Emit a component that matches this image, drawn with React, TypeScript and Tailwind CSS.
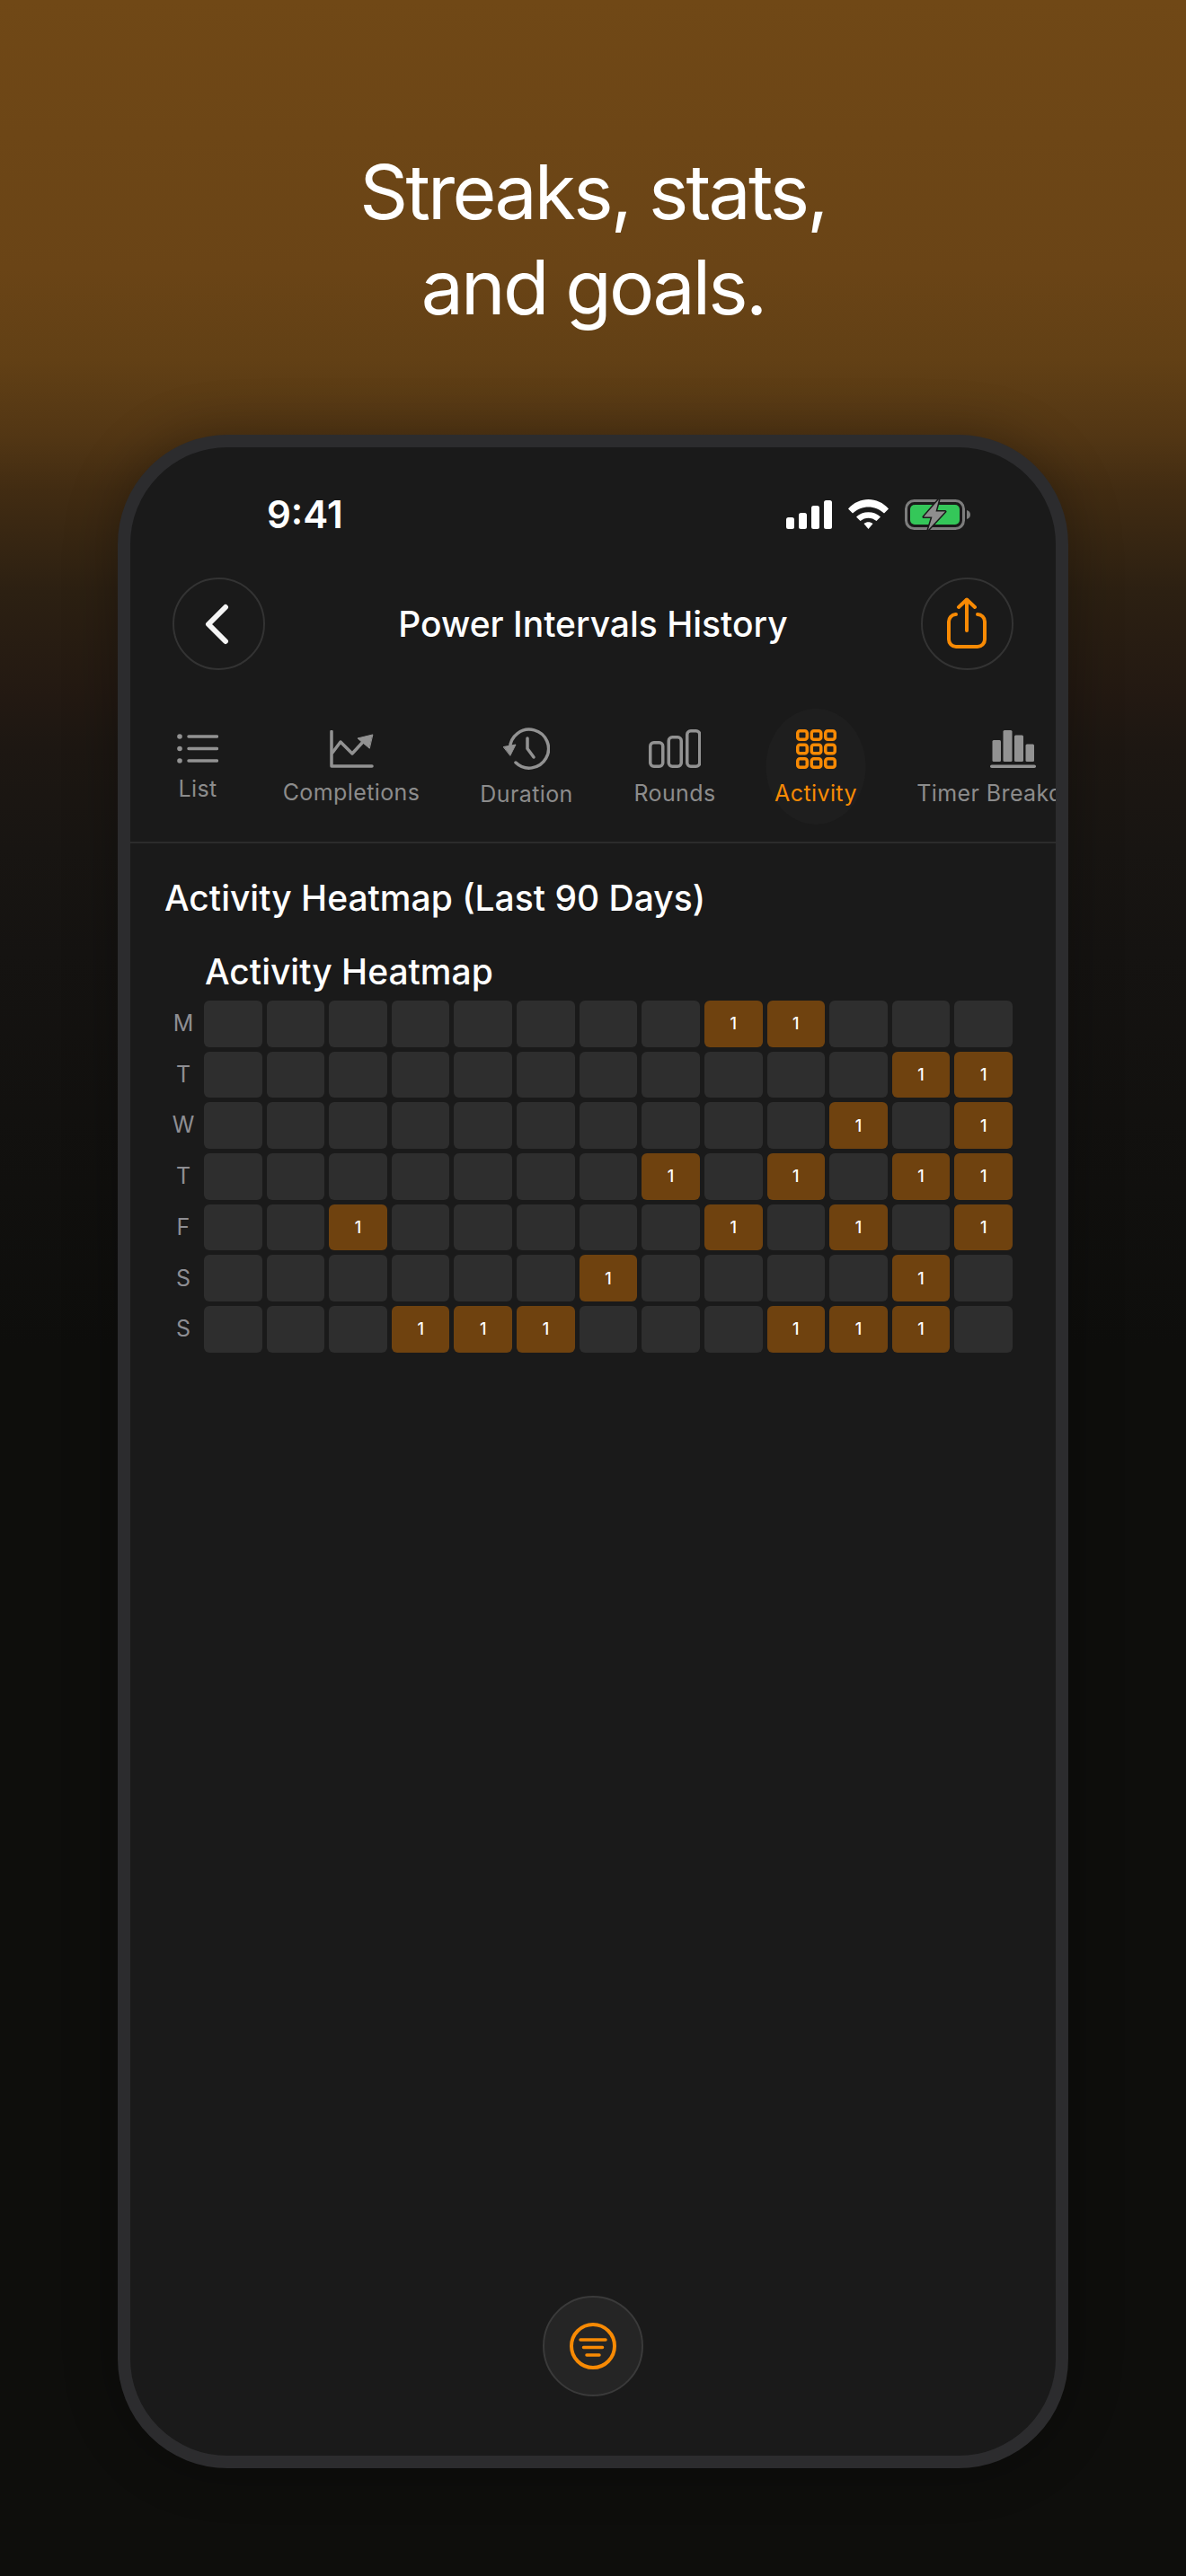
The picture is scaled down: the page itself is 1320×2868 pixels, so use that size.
const font = { fontFamily: "Inter, 'Noto Sans', sans-serif" };

const heat = [
  [8, 9],
  [11, 12],
  [10, 12],
  [7, 9, 11, 12],
  [2, 8, 10, 12],
  [6, 11],
  [3, 4, 5, 9, 10, 11],
];
const days = ["M", "T", "W", "T", "F", "S", "S"];
const columns = Array.from({ length: 13 }, (_, i) => i);

const SignalIcon = () => (
  <svg width="51" height="33" viewBox="0 0 51 33" fill="#fff">
    <rect x="0" y="19" width="9" height="13" rx="2.5" />
    <rect x="14" y="14" width="9" height="18" rx="2.5" />
    <rect x="28" y="6" width="9" height="26" rx="2.5" />
    <rect x="42" y="0" width="9" height="32" rx="2.5" />
  </svg>
);

const WifiIcon = () => (
  <svg width="45" height="34" viewBox="0 0 45 34" fill="#fff">
    <path d="M0 10.5C12 -3.5 33 -3.5 45 10.5L40 15.5C30 6 15 6 5 15.5Z" />
    <path d="M9 19.5C16 12.5 29 12.5 36 19.5L31.5 24C26 19.5 19 19.5 13.5 24Z" />
    <path d="M17.5 27C20.5 24.5 24.5 24.5 27.5 27L22.5 33Z" />
  </svg>
);

const BatteryIcon = () => (
  <svg width="73" height="34" viewBox="0 0 73 34">
    <rect x="1.5" y="1.5" width="64" height="31" rx="9" fill="none" stroke="#7d7d7d" strokeWidth="3" />
    <rect x="6" y="6" width="55" height="22" rx="5" fill="#34c759" />
    <path d="M69 12c2.500 .8 4 2.500 4 5s-1.500 4.200-4 5z" fill="#7d7d7d" />
    <path
      d="M38 0L21 19.500H30.500L26 34L45 13.500H34.500Z"
      fill="#8e8e8e"
      stroke="#1a1a1a"
      strokeWidth="3"
      strokeLinejoin="round"
      paintOrder="stroke"
    />
  </svg>
);

const BackIcon = () => (
  <svg width="30" height="46" viewBox="0 0 30 46" fill="none" stroke="#f5f5f5" strokeWidth="6" strokeLinecap="round" strokeLinejoin="round">
    <path d="M24 4L5 23L24 42" />
  </svg>
);

const ShareIcon = () => (
  <svg width="44" height="58" viewBox="0 0 44 58" fill="none" stroke="#f88a04" strokeWidth="4" strokeLinecap="round" strokeLinejoin="round">
    <path d="M10 19H9.500A8 8 0 0 0 2 27V47A8 8 0 0 0 10 55H34A8 8 0 0 0 42 47V27A8 8 0 0 0 34 19H34" />
    <path d="M22 37V3" />
    <path d="M13 11L22 2.500L31 11" />
  </svg>
);

const ListIcon = () => (
  <svg width="46" height="33" viewBox="0 0 46 33" fill="none" stroke="#929292" strokeWidth="3.500" strokeLinecap="round">
    <circle cx="3" cy="3" r="2.800" fill="#929292" stroke="none" />
    <circle cx="3" cy="16.500" r="2.800" fill="#929292" stroke="none" />
    <circle cx="3" cy="30" r="2.800" fill="#929292" stroke="none" />
    <path d="M13 3H44.500M13 16.500H44.500M13 30H44.500" />
  </svg>
);

const ChartIcon = () => (
  <svg width="49" height="42" viewBox="0 0 49 42" fill="none" stroke="#929292" strokeWidth="3.500" strokeLinecap="round" strokeLinejoin="round">
    <path d="M2 1.500V40H47" />
    <path d="M3 25L12 13L25 26L37 13" />
    <path d="M47.500 5L31 9L44 20Z" fill="#929292" strokeWidth="1" />
  </svg>
);

const ClockIcon = () => (
  <svg width="52" height="47" viewBox="0 0 52 47" fill="none" stroke="#929292" strokeWidth="3.500" strokeLinecap="round" strokeLinejoin="round">
    <path d="M7.500 23.500A21.500 21.500 0 1 1 14 39" />
    <path d="M0.500 21.500L14 19L8 31Z" fill="#929292" strokeWidth="1" stroke="#929292" />
    <path d="M27 12V23.500L34 33" />
  </svg>
);

const RoundsIcon = () => (
  <svg width="58" height="43" viewBox="0 0 58 43" fill="none" stroke="#929292" strokeWidth="3.500">
    <rect x="1.750" y="14.750" width="14" height="26.500" rx="4" />
    <rect x="22.250" y="8.750" width="14" height="32.500" rx="4" />
    <rect x="42.750" y="1.750" width="14" height="39.500" rx="4" />
  </svg>
);

const GridIcon = () => (
  <svg width="45" height="44" viewBox="0 0 45 44" fill="none" stroke="#f88a04" strokeWidth="3.500">
    {[0, 15.5, 31].map((y) =>
      [0, 15.5, 31].map((x) => (
        <rect key={`${x}-${y}`} x={x + 1.75} y={y + 1.75} width="10.500" height="9.500" rx="2.500" />
      ))
    )}
  </svg>
);

const BarsIcon = () => (
  <svg width="51" height="43" viewBox="0 0 51 43" fill="#929292">
    <rect x="2.500" y="12" width="9.500" height="24" rx="1.500" />
    <rect x="14.500" y="1" width="10" height="35" rx="1.500" />
    <rect x="27" y="6.500" width="10" height="29.500" rx="1.500" />
    <rect x="39.500" y="16.500" width="9.500" height="19.500" rx="1.500" />
    <rect x="0" y="39.500" width="51" height="3.500" rx="1.750" />
  </svg>
);

const FilterIcon = () => (
  <svg width="52" height="52" viewBox="0 0 52 52" fill="none" stroke="#f88a04" strokeWidth="4" strokeLinecap="round">
    <circle cx="26" cy="26" r="24" />
    <path d="M12 19H40M15.500 27.500H36.500M19 36H33" strokeWidth="3.500" />
  </svg>
);

type TabProps = {
  label: string;
  icon: React.ReactNode;
  width: string;
  top: string;
  gap: string;
  active?: boolean;
};

const Tab = ({ label, icon, width, top, gap, active }: TabProps) => (
  <div className={`relative flex flex-col items-center shrink-0 ${width} ${top}`}>
    {active && (
      <div className="absolute top-0 left-1/2 -translate-x-1/2 w-[111px] h-[129px] rounded-[50%] bg-[#1e1e1e]" />
    )}
    <div className="relative flex">{icon}</div>
    <span
      className={`relative whitespace-nowrap text-[25px] leading-[30px] tracking-[0.4px] ${gap} ${
        active ? "text-[#f88a04]" : "text-[#8c8c8c]"
      }`}
    >
      {label}
    </span>
  </div>
);

export default function App() {
  return (
    <div
      style={font}
      className="w-[1320px] h-[2868px] overflow-hidden flex flex-col items-center bg-[linear-gradient(180deg,#704816_0px,#6a4416_300px,#624015_400px,#523614_487px,#422c12_544px,#2c2012_659px,#231912_774px,#1d1712_831px,#181512_946px,#151311_1061px,#0e0e0c_1500px)]"
    >
      <h1 className="pt-[161px] text-center text-white font-normal text-[84px] leading-[106px] tracking-[-2.8px]">
        Streaks, stats,
        <br />
        and goals.
      </h1>

      <div className="mt-[111px] w-[1058px] h-[2264px] shrink-0 flex flex-col border-[14px] border-[#2c2c2e] bg-[#1a1a1a] rounded-[122px] shadow-[0_0_60px_rgba(0,0,0,0.3)] overflow-hidden">
        <div className="mt-[55px] h-[40px] flex items-center justify-between pl-[152px] pr-[95px]">
          <span className="text-white font-semibold text-[42px] leading-[40px]">9:41</span>
          <div className="flex items-center gap-[18px]">
            <SignalIcon />
            <WifiIcon />
            <BatteryIcon />
          </div>
        </div>

        <div className="mt-[50px] px-[47px] flex items-center justify-between">
          <button className="w-[103px] h-[103px] rounded-full border-2 border-[#333333] flex items-center justify-center pr-[4px]">
            <BackIcon />
          </button>
          <span className="text-white font-medium text-[39px] leading-[46px]">Power Intervals History</span>
          <button className="w-[103px] h-[103px] rounded-full border-2 border-[#333333] flex items-center justify-center pb-[1px]">
            <ShareIcon />
          </button>
        </div>

        <div className="mt-[43px] h-[150px] flex border-b-2 border-[#2c2c2c] overflow-hidden">
          <Tab label="List" icon={<ListIcon />} width="w-[150px]" top="pt-[28px]" gap="mt-[13px]" />
          <Tab label="Completions" icon={<ChartIcon />} width="w-[192px]" top="pt-[24px]" gap="mt-[12px]" />
          <Tab label="Duration" icon={<ClockIcon />} width="w-[198px]" top="pt-[21px]" gap="mt-[12px]" />
          <Tab label="Rounds" icon={<RoundsIcon />} width="w-[132px]" top="pt-[23px]" gap="mt-[13px]" />
          <Tab label="Activity" icon={<GridIcon />} width="w-[182px]" top="pt-[23px]" gap="mt-[12px]" active />
          <Tab label="Timer Breakdown" icon={<BarsIcon />} width="w-[256px]" top="pt-[23px]" gap="mt-[13px]" />
        </div>

        <h2 className="mt-[38px] pl-[38px] text-white font-medium text-[39px] leading-[46px]">
          Activity Heatmap (Last 90 Days)
        </h2>
        <h3 className="mt-[36px] pl-[83px] text-white font-medium text-[39px] leading-[46px]">Activity Heatmap</h3>

        <div className="mt-[9px] ml-[41px] w-[941px] grid grid-cols-[36px_repeat(13,minmax(0,1fr))] auto-rows-[51.7px] gap-[5px]">
          {days.map((day, row) => (
            <div key={row} className="contents">
              <div className="flex items-center justify-center text-[25px] text-[#8e8e93]">{day}</div>
              {columns.map((col) =>
                heat[row].includes(col) ? (
                  <div
                    key={col}
                    className="flex items-center justify-center rounded-[6px] bg-[#6f420f] text-white text-[18px] font-medium"
                  >
                    1
                  </div>
                ) : (
                  <div key={col} className="rounded-[6px] bg-[#2e2e2e]" />
                )
              )}
            </div>
          ))}
        </div>

        <button className="mt-auto mb-[66px] self-center w-[112px] h-[112px] rounded-full bg-[#252525] border-2 border-[#3a3a3a] flex items-center justify-center">
          <FilterIcon />
        </button>
      </div>
    </div>
  );
}
